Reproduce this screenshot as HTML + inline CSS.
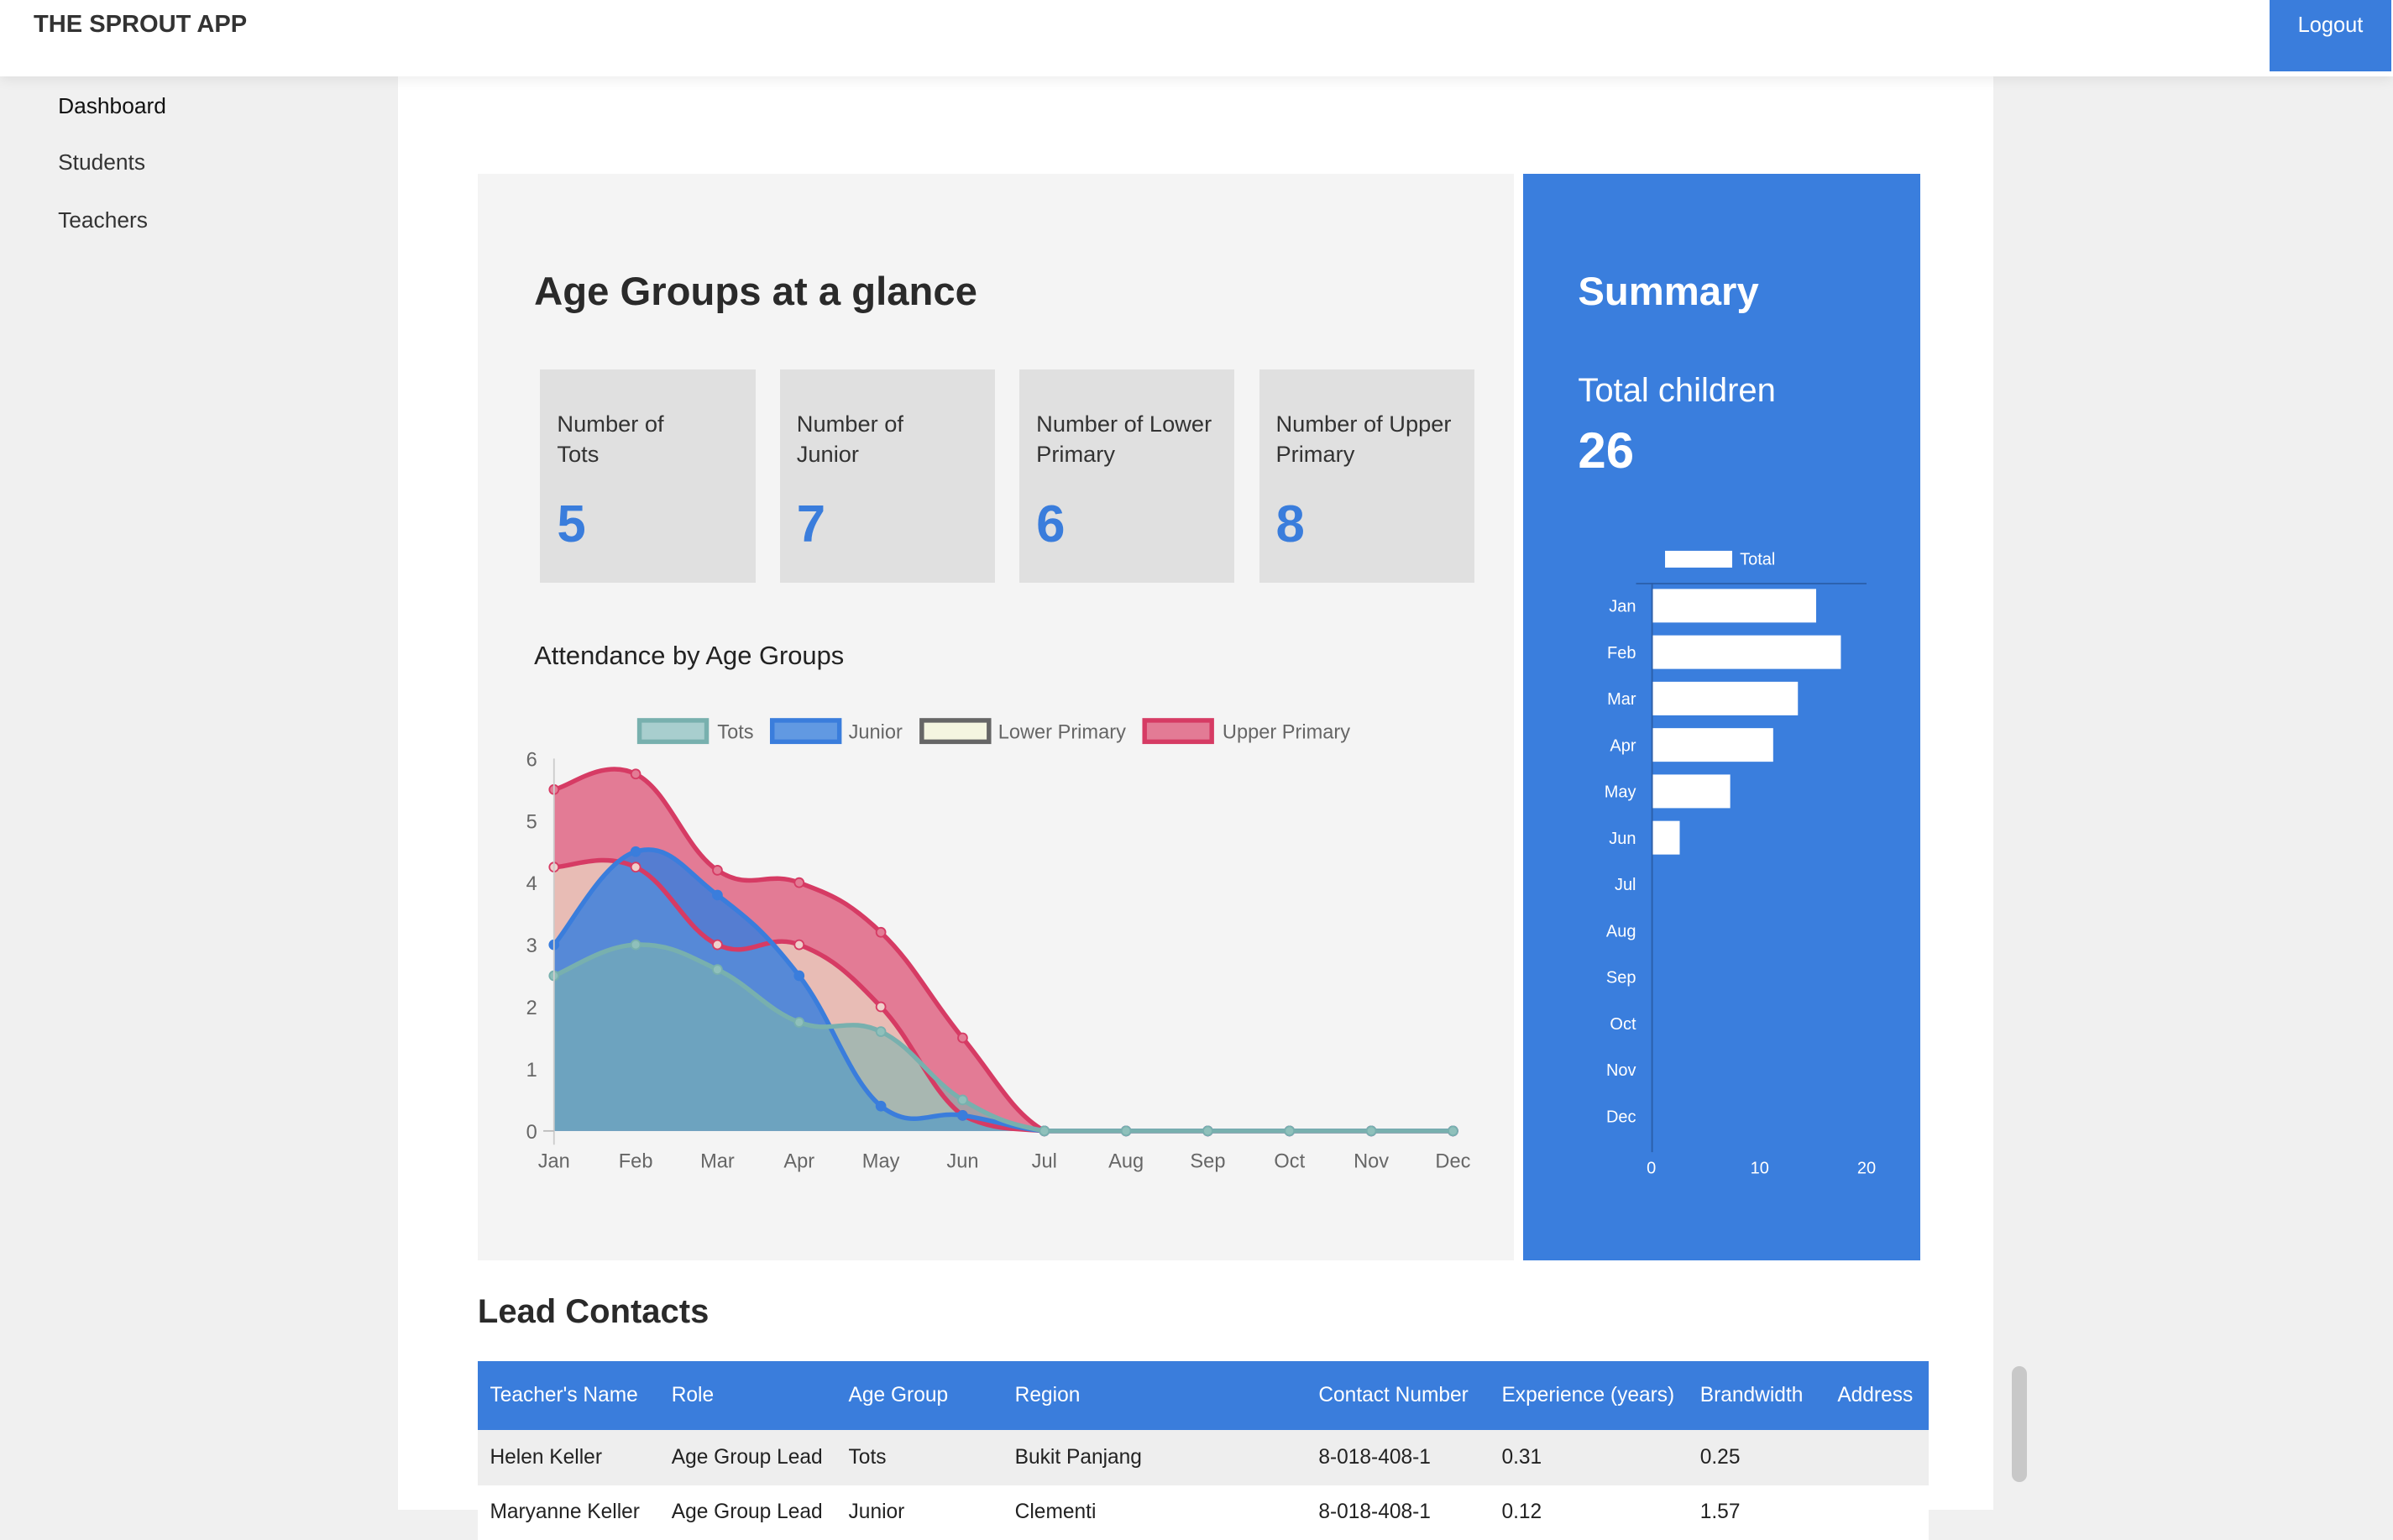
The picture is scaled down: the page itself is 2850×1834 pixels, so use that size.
<!DOCTYPE html>
<html><head><meta charset="utf-8">
<style>
html,body{margin:0;padding:0;}
body{width:1568px;height:989px;overflow:hidden;zoom:1.8176;background:#f0f0f0;font-family:"Liberation Sans",sans-serif;color:#222;position:relative;}
.abs{position:absolute;}
#hdr{left:0;top:0;width:1568px;height:50px;background:#fff;box-shadow:0 2px 8px rgba(0,0,0,0.08);z-index:2;}
#logo{left:22px;top:7px;font-size:16px;font-weight:bold;color:#333;}
#logout{left:1487px;top:0;width:80px;height:47px;background:#3a7ddc;color:#fff;font-size:14px;text-align:center;line-height:34px;}
.nav{left:38px;font-size:14.5px;color:#111;}
#main{left:261px;top:50px;width:1045px;height:939px;background:#fff;}
#card{left:313px;top:114px;width:679px;height:712px;background:#f4f4f4;}
#sum{left:998px;top:114px;width:260px;height:712px;background:#3a7edd;color:#fff;}
.box{top:242px;width:141px;height:140px;background:#e0e0e0;}
.box .l{position:absolute;left:11px;top:26px;font-size:15px;line-height:20px;color:#333;}
.box .n{position:absolute;left:11px;top:82px;font-size:34px;font-weight:bold;color:#3a7ddc;}
table{border-collapse:collapse;font-size:13.5px;table-layout:fixed;}
th,td{white-space:nowrap;overflow:hidden;}
th{background:#3a7ddc;color:#fff;font-weight:normal;text-align:left;height:45px;padding:0 8px;}
td{height:36px;padding:0 8px;background:#eee;}
</style></head><body>
<div id="hdr" class="abs"><div id="logo" class="abs">THE SPROUT APP</div><div id="logout" class="abs">Logout</div></div>
<div class="abs nav" style="top:61px">Dashboard</div>
<div class="abs nav" style="top:98px;color:#333">Students</div>
<div class="abs nav" style="top:136px;color:#333">Teachers</div>
<div id="main" class="abs"></div>
<div class="abs" style="left:1318px;top:895px;width:10px;height:76px;background:#c8c8c8;border-radius:5px"></div>
<div id="card" class="abs"></div>
<div class="abs" style="left:350px;top:176px;font-size:26px;font-weight:bold;color:#2a2a2a">Age Groups at a glance</div>
<div class="abs box" style="left:354px"><div class="l">Number of<br>Tots</div><div class="n">5</div></div>
<div class="abs box" style="left:511px"><div class="l">Number of<br>Junior</div><div class="n">7</div></div>
<div class="abs box" style="left:668px"><div class="l">Number of Lower<br>Primary</div><div class="n">6</div></div>
<div class="abs box" style="left:825px"><div class="l">Number of Upper<br>Primary</div><div class="n">8</div></div>
<div class="abs" style="left:350px;top:420px;font-size:17px;color:#222">Attendance by Age Groups</div>
<svg class="abs" style="left:0;top:0" width="1568" height="989" id="ch">
<g font-family="Liberation Sans,sans-serif" font-size="13" fill="#666">
<rect x="419" y="472" width="44" height="14" fill="#a8cece" stroke="#78b0ae" stroke-width="3"/><text x="470" y="484">Tots</text>
<rect x="506" y="472" width="44" height="14" fill="#6199e2" stroke="#3a7ddc" stroke-width="3"/><text x="556" y="484">Junior</text>
<rect x="604" y="472" width="44" height="14" fill="#f4f5e0" stroke="#666" stroke-width="3"/><text x="654" y="484">Lower Primary</text>
<rect x="750" y="472" width="44" height="14" fill="#e37b95" stroke="#d63b64" stroke-width="3"/><text x="801" y="484">Upper Primary</text>
</g>
<clipPath id="cp"><rect x="300" y="480" width="700" height="262"/></clipPath>
<g id="plot"></g>
<g font-family="Liberation Sans,sans-serif" font-size="13" fill="#666" id="axes"></g>
</svg>
<div id="sum" class="abs">
<div class="abs" style="left:36px;top:62px;font-size:26px;font-weight:bold">Summary</div>
<div class="abs" style="left:36px;top:130px;font-size:22px">Total children</div>
<div class="abs" style="left:36px;top:162px;font-size:33px;font-weight:bold">26</div>
</div>
<svg class="abs" style="left:998px;top:114px" width="260" height="712" font-family="Liberation Sans,sans-serif" font-size="11" fill="#fff">
<rect x="93" y="247" width="44" height="11" fill="#fff"/><text x="142" y="256">Total</text>
<line x1="74" y1="268.5" x2="225" y2="268.5" stroke="#2b5ea8"/>
<line x1="84.5" y1="268" x2="84.5" y2="641" stroke="#2b5ea8"/>
<g id="bars"></g>
<text x="84" y="655" text-anchor="middle">0</text><text x="155" y="655" text-anchor="middle">10</text><text x="225" y="655" text-anchor="middle">20</text>
</svg>
<div class="abs" style="left:313px;top:847px;font-size:22px;font-weight:bold;color:#2a2a2a">Lead Contacts</div>
<table class="abs" style="left:313px;top:892px;width:951px">
<colgroup><col style="width:119px"><col style="width:116px"><col style="width:109px"><col style="width:199px"><col style="width:120px"><col style="width:130px"><col style="width:90px"><col></colgroup>
<tr><th>Teacher's Name</th><th>Role</th><th>Age Group</th><th>Region</th><th>Contact Number</th><th>Experience (years)</th><th>Brandwidth</th><th>Address</th></tr>
<tr><td>Helen Keller</td><td>Age Group Lead</td><td>Tots</td><td>Bukit Panjang</td><td>8-018-408-1</td><td>0.31</td><td>0.25</td><td></td></tr>
<tr><td style="background:#fff">Maryanne Keller</td><td style="background:#fff">Age Group Lead</td><td style="background:#fff">Junior</td><td style="background:#fff">Clementi</td><td style="background:#fff">8-018-408-1</td><td style="background:#fff">0.12</td><td style="background:#fff">1.57</td><td style="background:#fff"></td></tr>
</table>
<script>
var X0=363,DX=53.55,Y0=741,DY=40.67;
var m=["Jan","Feb","Mar","Apr","May","Jun","Jul","Aug","Sep","Oct","Nov","Dec"];
function pts(a){return a.map(function(v,i){return [X0+i*DX,Y0-v*DY];});}
function curve(p){var d="M"+p[0][0]+","+p[0][1];for(var i=0;i<p.length-1;i++){var p0=p[i-1]||p[i],p1=p[i],p2=p[i+1],p3=p[i+2]||p2,t=0.2;
d+=" C"+(p1[0]+(p2[0]-p0[0])*t)+","+Math.min(Y0,p1[1]+(p2[1]-p0[1])*t)+" "+(p2[0]-(p3[0]-p1[0])*t)+","+Math.min(Y0,p2[1]-(p3[1]-p1[1])*t)+" "+p2[0]+","+p2[1];}return d;}
var z=[0,0,0,0,0];
var S=[
 {d:[5.5,5.75,4.2,4,3.2,1.5,0].concat(z),f:"#e37b95",s:"#d63b64",pf:"#e37b95"},
 {d:[4.25,4.25,3,3,2,0.25,0].concat(z),f:"#e8bcb5",s:"#d63b64",pf:"#f0d0cc"},
 {d:[3,4.5,3.8,2.5,0.4,0.25,0].concat(z),f:"rgba(54,126,222,0.82)",s:"#3a7ddc",pf:"#3a7ddc"},
 {d:[2.5,3,2.6,1.75,1.6,0.5,0].concat(z),f:"rgba(125,180,175,0.6)",s:"#78b0ae",pf:"#8fc0bb"}];
var h="";
S.forEach(function(s){var p=pts(s.d),c=curve(p);h+='<path d="'+c+' L'+p[11][0]+','+Y0+' L'+X0+','+Y0+' Z" fill="'+s.f+'"/>';});
S.forEach(function(s){var p=pts(s.d);h+='<path d="'+curve(p)+'" fill="none" stroke="'+s.s+'" stroke-width="3"/>';p.forEach(function(q){h+='<circle cx="'+q[0]+'" cy="'+q[1]+'" r="3" fill="'+s.pf+'" stroke="'+s.s+'"/>';});});
h+='<line x1="363" y1="497" x2="363" y2="750" stroke="#ccc"/><line x1="356" y1="741" x2="363" y2="741" stroke="#bbb"/>';
document.getElementById("plot").innerHTML=h;
var a="";for(var i=0;i<=6;i++)a+='<text x="352" y="'+(Y0-i*DY+5)+'" text-anchor="end">'+i+'</text>';
m.forEach(function(t,i){a+='<text x="'+(X0+i*DX)+'" y="765" text-anchor="middle">'+t+'</text>';});
document.getElementById("axes").innerHTML=a;
var b="",v=[15.2,17.5,13.5,11.2,7.2,2.5];
m.forEach(function(t,i){var y=283+i*30.4;b+='<text x="74" y="'+(y+4)+'" text-anchor="end">'+t+'</text>';if(v[i])b+='<rect x="85" y="'+(y-11)+'" width="'+(v[i]*7.04)+'" height="22" fill="#fff"/>';});
document.getElementById("bars").innerHTML=b;
</script>
</body></html>
